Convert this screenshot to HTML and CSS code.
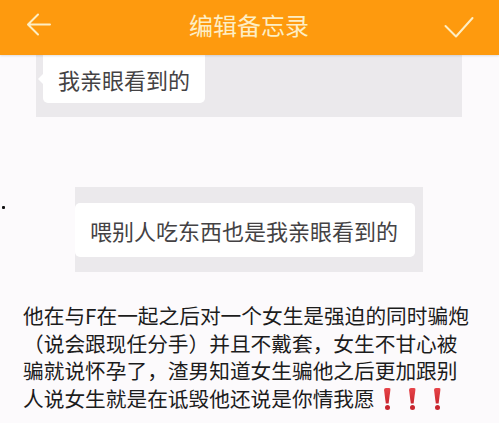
FILE: index.html
```html
<!DOCTYPE html>
<html lang="zh">
<head>
<meta charset="utf-8">
<link rel="stylesheet" href="styles.css">
</head>
<body>
<header class="bar">
  <svg class="icon back" width="26" height="26" viewBox="0 0 26 26">
    <path d="M24 11.5H3M12 1.5L2 11.5L12 21.5" fill="none" stroke="#fdeec4" stroke-width="2" stroke-linecap="round" stroke-linejoin="round"/>
  </svg>
  <div class="title">编辑备忘录</div>
  <svg class="icon check" width="30" height="22" viewBox="0 0 30 22">
    <path d="M1.5 10L12 20.5L28.5 2" fill="none" stroke="#fdeec4" stroke-width="2" stroke-linecap="round" stroke-linejoin="round"/>
  </svg>
</header>

<section class="shot1">
  <div class="bubble1">我亲眼看到的</div>
</section>

<section class="row2">
  <span class="dot"></span>
  <div class="shot2">
    <div class="bubble2">喂别人吃东西也是我亲眼看到的</div>
  </div>
</section>

<p class="story">他在与F在一起之后对一个女生是强迫的同时骗炮<br>（说会跟现任分手）并且不戴套，女生不甘心被<br>骗就说怀孕了，渣男知道女生骗他之后更加跟别<br>人说女生就是在诋毁他还说是你情我愿<span class="bang"><i></i><b></b></span><span class="bang"><i></i><b></b></span><span class="bang"><i></i><b></b></span></p>
</body>
</html>
```

FILE: styles.css
```css
html, body {
  margin: 0;
  padding: 0;
}
body {
  width: 499px;
  height: 423px;
  overflow: hidden;
  background: #fcfafc;
  font-family: "Noto Sans CJK SC", "Noto Sans", sans-serif;
}
.bar {
  height: 55px;
  background: #fe9a0e;
  display: flex;
  align-items: center;
  justify-content: space-between;
  padding: 0 25px 0 26px;
  box-sizing: border-box;
  box-shadow: 0 1px 2px rgba(0,0,0,0.12);
  position: relative;
  z-index: 1;
}
.icon {
  display: block;
}
.back {
  margin-top: -4px;
}
.check {
  margin-top: -2px;
}
.title {
  color: #fdeec4;
  font-size: 24px;
  line-height: 30px;
  margin-top: -6px;
  margin-left: 2px;
}
.shot1 {
  margin-left: 36px;
  width: 426px;
  height: 62px;
  background: #ebe9ec;
}
.bubble1 {
  position: relative;
  margin-left: 7px;
  width: 162px;
  height: 48px;
  background: #ffffff;
  border-radius: 0 0 5px 5px;
  box-sizing: border-box;
  padding-left: 15px;
  font-size: 22px;
  line-height: 48px;
  color: #444244;
}
.bubble1::before {
  content: "";
  position: absolute;
  left: -5px;
  top: 19px;
  border-top: 5px solid transparent;
  border-bottom: 5px solid transparent;
  border-right: 5px solid #ffffff;
}
.row2 {
  display: flex;
  align-items: flex-start;
  margin-top: 70px;
}
.dot {
  width: 3px;
  height: 3px;
  background: #111;
  border-radius: 1px;
  margin: 19px 0 0 2px;
}
.shot2 {
  margin-left: 70px;
  width: 348px;
  height: 85px;
  background: #ebe9ec;
  padding-top: 16px;
  box-sizing: border-box;
}
.bubble2 {
  width: 340px;
  height: 54px;
  background: #ffffff;
  border-radius: 5px;
  box-sizing: border-box;
  padding-left: 15px;
  font-size: 22px;
  line-height: 54px;
  color: #444244;
  white-space: nowrap;
}
.story {
  margin: 30px 0 0 0;
  padding-left: 23px;
  font-size: 20.7px;
  line-height: 27.5px;
  color: #1c1c1c;
  white-space: nowrap;
}
.bang {
  display: inline-block;
  width: 25px;
  height: 22px;
  position: relative;
  vertical-align: -3px;
}
.bang i {
  position: absolute;
  left: 9px;
  top: 0;
  width: 7px;
  height: 16px;
  background: linear-gradient(#e8454a, #c8262e);
  clip-path: polygon(0 0, 100% 0, 70% 100%, 30% 100%);
  border-radius: 2px 2px 0 0;
}
.bang b {
  position: absolute;
  left: 10px;
  top: 17px;
  width: 5px;
  height: 5px;
  border-radius: 50%;
  background: #c8262e;
}
```
